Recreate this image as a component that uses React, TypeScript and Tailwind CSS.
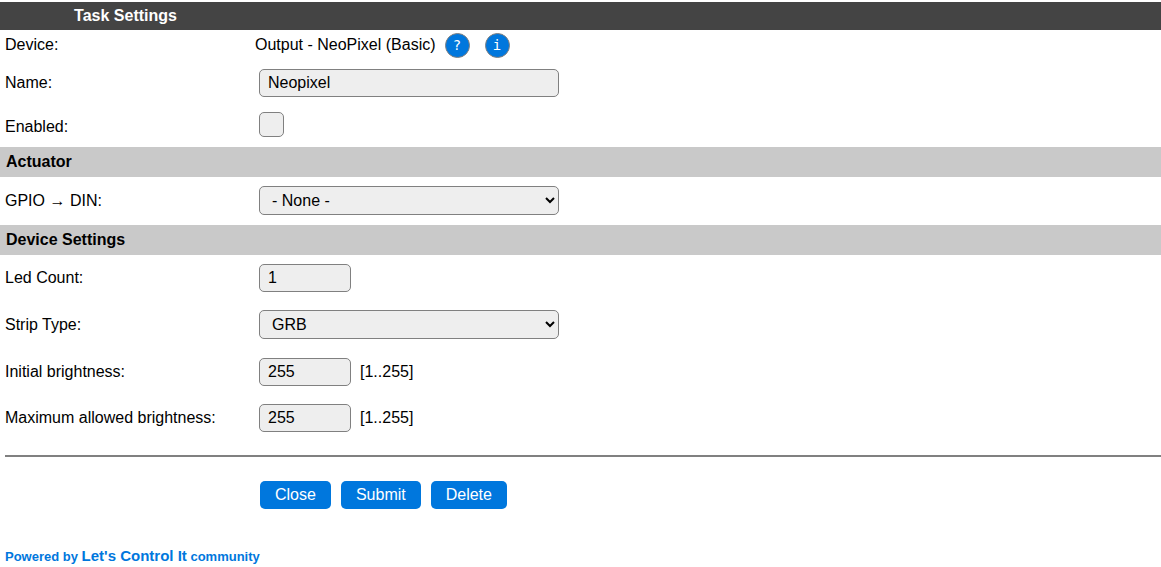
import type { ReactNode } from "react";

const control =
  "ml-1 rounded-[5px] border border-[#808080] bg-[#eeeeee] px-2 text-base leading-5 text-black";
const action =
  "flex h-7 items-center rounded-[5px] bg-[#0077dd] px-[15px] text-base leading-5 text-white hover:bg-[#0066bb]";
const help =
  "flex size-[25px] items-center justify-center rounded-full border border-[#808080] bg-[#0077dd] font-['DejaVu_Sans_Mono',monospace] text-sm leading-5 text-white";

function Row({
  label,
  htmlFor,
  height,
  children,
}: {
  label: ReactNode;
  htmlFor?: string;
  height: string;
  children: ReactNode;
}) {
  return (
    <div className={`grid grid-cols-[250px_1fr] items-center px-[5px] ${height}`}>
      {htmlFor ? <label htmlFor={htmlFor}>{label}</label> : <span>{label}</span>}
      <div className="flex items-center">{children}</div>
    </div>
  );
}

function Section({ title }: { title: string }) {
  return <h2 className="h-[30px] bg-[#c9c9c9] px-1.5 py-[5px] font-bold">{title}</h2>;
}

function NumberField({ id, value, range }: { id: string; value: number; range?: string }) {
  return (
    <>
      <input
        id={id}
        type="number"
        defaultValue={value}
        className={`${control} h-7 w-[92px] [appearance:textfield] [&::-webkit-inner-spin-button]:appearance-none`}
      />
      {range && <span className="ml-[9px]">{range}</span>}
    </>
  );
}

export default function App() {
  return (
    <div className="bg-white pt-0.5 font-['Liberation_Sans',Arial,sans-serif] text-base leading-5 text-black">
      <form onSubmit={(e) => e.preventDefault()}>
        <header className="h-7 bg-[#444444] pt-1 text-white">
          <h1 className="w-[251px] text-center font-bold">Task Settings</h1>
        </header>

        <Row label="Device:" height="h-[30px]">
          <span>Output - NeoPixel (Basic)</span>
          <a href="#help" aria-label="Help" className={`${help} ml-[9px]`}>
            ?
          </a>
          <a href="#info" aria-label="Information" className={`${help} ml-[15px]`}>
            i
          </a>
        </Row>
        <Row label="Name:" htmlFor="name" height="h-[46px]">
          <input
            id="name"
            type="text"
            defaultValue="Neopixel"
            className={`${control} h-7 w-full max-w-[300px]`}
          />
        </Row>
        <Row label="Enabled:" htmlFor="enabled" height="h-[41px]">
          <input
            id="enabled"
            type="checkbox"
            className="mb-1 ml-1 size-[25px] appearance-none rounded-[5px] border border-[#808080] bg-[#eeeeee] checked:bg-[#0077dd]"
          />
        </Row>

        <Section title="Actuator" />
        <Row
          label={
            <>
              GPIO <span className="font-['Liberation_Serif',serif]">→</span> DIN:
            </>
          }
          htmlFor="gpio"
          height="h-12 pb-px"
        >
          <select id="gpio" className={`${control} h-[29px] w-full max-w-[300px]`}>
            <option>- None -</option>
          </select>
        </Row>

        <Section title="Device Settings" />
        <Row label="Led Count:" htmlFor="count" height="h-[46px]">
          <NumberField id="count" value={1} />
        </Row>
        <Row label="Strip Type:" htmlFor="strip" height="h-12 pb-px">
          <select id="strip" className={`${control} h-[29px] w-full max-w-[300px]`}>
            <option>GRB</option>
            <option>GRBW</option>
          </select>
        </Row>
        <Row label="Initial brightness:" htmlFor="initial" height="h-[46px]">
          <NumberField id="initial" value={255} range="[1..255]" />
        </Row>
        <Row label="Maximum allowed brightness:" htmlFor="maximum" height="h-[46px]">
          <NumberField id="maximum" value={255} range="[1..255]" />
        </Row>

        <hr className="mt-3.5 ml-[5px] border-t-2 border-[#808080]" />

        <div className="mt-6 flex gap-2.5 pl-[260px]">
          <a href="#devices" className={action}>
            Close
          </a>
          <button type="submit" className={action}>
            Submit
          </button>
          <button type="button" className={action}>
            Delete
          </button>
        </div>
      </form>

      <footer className="mt-[37px] px-[5px] text-[13px] leading-5 font-bold text-[#0077dd]">
        <a href="#community">
          Powered by <span className="text-[15px]">Let's Control It</span> community
        </a>
      </footer>
    </div>
  );
}
